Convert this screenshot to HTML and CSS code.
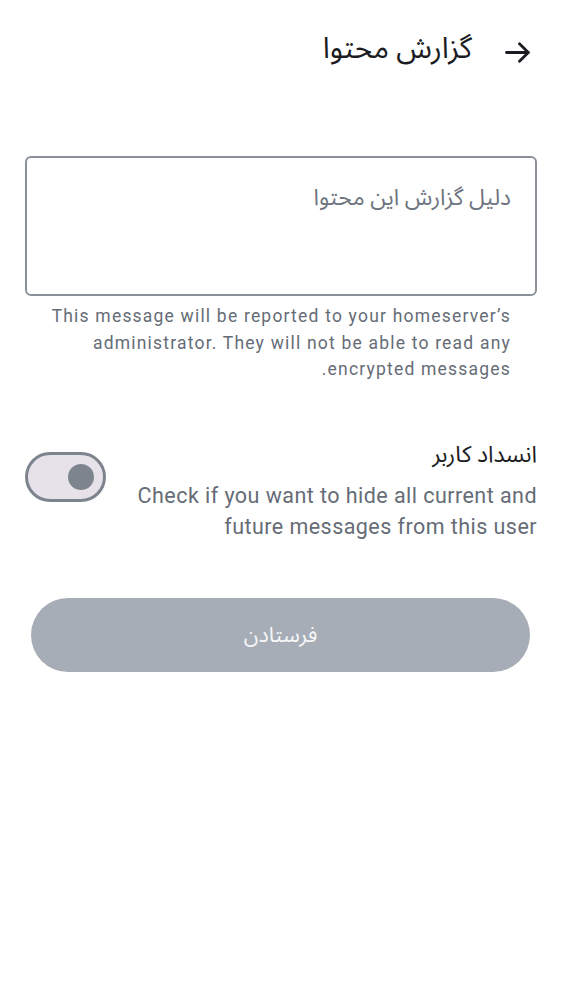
FILE: index.html
```html
<!DOCTYPE html>
<html lang="fa" dir="rtl">
<head>
<meta charset="utf-8">
<link rel="stylesheet" href="styles.css">
</head>
<body>
<div class="page">
  <header class="topbar">
    <svg class="back" viewBox="0 0 26 21" width="26" height="21" aria-hidden="true">
      <path d="M1.5 10.5H23.5M14.5 1.8L23.3 10.5L14.5 19.2" fill="none" stroke="#1b1c21" stroke-width="2.8" stroke-linecap="round" stroke-linejoin="round"/>
    </svg>
    <h1 class="title">گزارش محتوا</h1>
  </header>

  <main class="content">
    <div class="field">
      <span class="placeholder">دلیل گزارش این محتوا</span>
    </div>
    <p class="helper">This message will be reported to your homeserver’s administrator. They will not be able to read any encrypted messages.</p>

    <div class="toggle-row">
      <div class="toggle-text">
        <div class="toggle-title">انسداد کاربر</div>
        <div class="toggle-desc">Check if you want to hide all current and future messages from this user</div>
      </div>
      <div class="switch"><span class="thumb"></span></div>
    </div>

    <button class="send" type="button">فرستادن</button>
  </main>
</div>
</body>
</html>
```

FILE: styles.css
```css
html, body {
  margin: 0;
  padding: 0;
  background: #ffffff;
}

body {
  font-family: Roboto, "Noto Sans Arabic", "DejaVu Sans", sans-serif;
  color: #1b1c21;
}

.page {
  width: 562px;
  min-height: 1000px;
}

.topbar {
  display: flex;
  align-items: center;
  height: 98px;
  padding-right: 31px;
  gap: 33px;
  box-sizing: border-box;
}

.back {
  display: block;
  flex: none;
  margin-top: 6px;
}

.title {
  margin: 0;
  font-size: 29.5px;
  font-weight: 400;
  color: #1b1c21;
  line-height: 1;
}

.content {
  padding: 58px 25px 0 25px;
  display: flex;
  flex-direction: column;
}

.field {
  height: 140px;
  border: 2px solid #8b919a;
  border-radius: 6px;
  box-sizing: border-box;
  padding: 24px 24px 0 24px;
}

.placeholder {
  font-size: 22.8px;
  color: #6f7580;
  line-height: 32px;
}

.helper {
  margin: 7px 26px 0 26px;
  font-size: 17.5px;
  line-height: 26.5px;
  letter-spacing: 1.2px;
  color: #656c76;
}

.toggle-row {
  display: flex;
  align-items: flex-start;
  justify-content: space-between;
  margin-top: 57px;
}

.toggle-text {
  display: flex;
  flex-direction: column;
}

.toggle-title {
  font-size: 23px;
  line-height: 30px;
  color: #1b1c21;
}

.toggle-desc {
  margin-top: 10px;
  width: 410px;
  font-size: 21.5px;
  line-height: 31px;
  letter-spacing: 0.45px;
  color: #656c76;
}

.switch {
  flex: none;
  margin-top: 12px;
  width: 81px;
  height: 50px;
  box-sizing: border-box;
  border: 3px solid #7d848d;
  border-radius: 25px;
  background: #e7e1e9;
  display: flex;
  align-items: center;
  justify-content: flex-end;
  padding-right: 9px;
  direction: ltr;
}

.thumb {
  width: 26px;
  height: 26px;
  border-radius: 50%;
  background: #7d848d;
}

.send {
  margin: 56px 7px 0 6px;
  height: 74px;
  border: none;
  border-radius: 37px;
  background: #a7adb6;
  color: #f6f7f8;
  font-family: Roboto, "Noto Sans Arabic", "DejaVu Sans", sans-serif;
  font-size: 21.5px;
}
```
